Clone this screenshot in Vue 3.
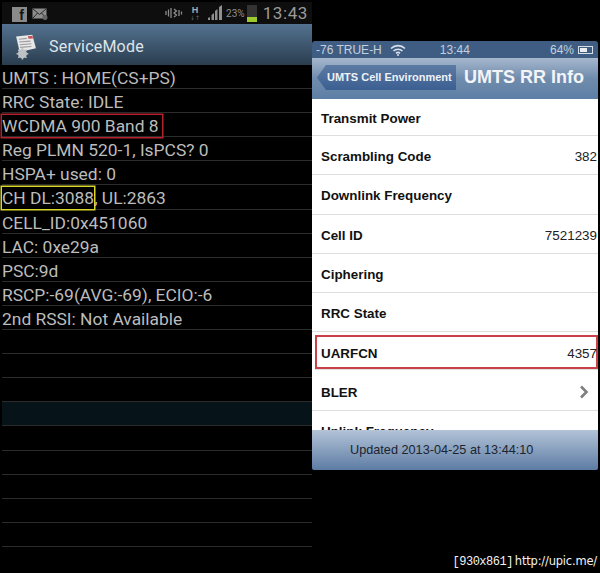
<script setup>
const androidRows = [
  { text: 'UMTS : HOME(CS+PS)' },
  { text: 'RRC State: IDLE' },
  { text: 'WCDMA 900 Band 8', mark: 'red' },
  { text: 'Reg PLMN 520-1, IsPCS? 0' },
  { text: 'HSPA+ used: 0' },
  { text: 'CH DL:3088', rest: ', UL:2863', mark: 'yellow' },
  { text: 'CELL_ID:0x451060' },
  { text: 'LAC: 0xe29a' },
  { text: 'PSC:9d' },
  { text: 'RSCP:-69(AVG:-69), ECIO:-6' },
  { text: '2nd RSSI: Not Available' },
  { text: '' },
  { text: '' },
  { text: '' },
  { text: '', active: true },
  { text: '' },
  { text: '' },
  { text: '' },
  { text: '' },
  { text: '' }
]
const iosRows = [
  { label: 'Transmit Power' },
  { label: 'Scrambling Code', value: '382' },
  { label: 'Downlink Frequency' },
  { label: 'Cell ID', value: '7521239' },
  { label: 'Ciphering' },
  { label: 'RRC State' },
  { label: 'UARFCN', value: '4357', mark: true },
  { label: 'BLER', chevron: true },
  { label: 'Uplink Frequency' }
]
</script>

<template>
  <div class="page">
    <section class="android">
      <div class="statusbar">
        <span class="fb">f</span>
        <svg class="mail" width="16" height="12" viewBox="0 0 16 12"><rect x="0.5" y="0.5" width="14" height="10" fill="#8d8d8d"/><path d="M1 1l6.500 5.500L14 1M1 10l4.500-5M14 10l-4.500-5" fill="none" stroke="#2a2a2a" stroke-width="1"/><circle cx="13" cy="9.500" r="2.500" fill="#666"/></svg>
        <span class="spacer"></span>
        <svg class="mute" width="18" height="12" viewBox="0 0 18 12"><path d="M1 4v4M3.500 2.500v7M6 1v10M9 2l2.500 2-2.500 2 2.500 2-2.500 2M14 3v6M16.500 4.500v3" fill="none" stroke="#8b8b8b" stroke-width="1.300"/></svg>
        <span class="hplus"><b>H</b><i>↓↑</i></span>
        <svg class="signal" width="15" height="15" viewBox="0 0 15 15"><path d="M0 15V13L2 12V15ZM3.500 15V10L6 8V15ZM7 15V6L9.500 4V15ZM11 15V2L14 0V15Z" fill="#8f8f8f"/></svg>
        <span class="pct">23%</span>
        <span class="battery"><i></i></span>
        <span class="clock">13:43</span>
      </div>
      <header class="actionbar">
        <svg class="appicon" width="24" height="27" viewBox="0 0 26 30">
          <path d="M2 4L20 2L24 17L6 21Z" fill="#e8e8e8"/>
          <path d="M15 3.500L20 3L20.800 6L15.800 6.500Z" fill="#c8525a"/>
          <path d="M5 7L14 6M5.500 10L18 9M6 13L19 12M6.500 16L19 15" stroke="#9a9a9a" stroke-width="1.200"/>
          <circle cx="9" cy="23" r="5" fill="#bfc2c4"/>
          <circle cx="9" cy="23" r="2" fill="#5b6670"/>
          <path d="M9 16.500V29.500M2.500 23H15.500M4.500 18.500L13.500 27.500M13.500 18.500L4.500 27.500" stroke="#bfc2c4" stroke-width="1.800"/>
        </svg>
        <h1>ServiceMode</h1>
      </header>
      <div class="list">
        <div v-for="(row, i) in androidRows" :key="i" class="row" :class="{ active: row.active }">
          <span :class="row.mark">{{ row.text }}</span>{{ row.rest }}
        </div>
      </div>
    </section>

    <section class="ios">
      <div class="ios-status">
        <span>-76 TRUE-H</span>
        <svg class="wifi" width="16" height="12" viewBox="0 0 16 12"><path d="M1 4.500a10 10 0 0 1 14 0M3.500 7a6.500 6.500 0 0 1 9 0M6 9.300a3 3 0 0 1 4 0" fill="none" stroke="#d8e0ea" stroke-width="1.600"/><circle cx="8" cy="11" r="1" fill="#d8e0ea"/></svg>
        <span class="ios-time">13:44</span>
        <span class="ios-pct">64%</span>
        <span class="ios-batt"><i></i></span>
      </div>
      <nav class="navbar">
        <span class="back">UMTS Cell Environment</span>
        <h2>UMTS RR Info</h2>
      </nav>
      <div class="ios-list">
        <div v-for="row in iosRows" :key="row.label" class="ios-row" :class="{ marked: row.mark }">
          <strong>{{ row.label }}</strong>
          <span v-if="row.value">{{ row.value }}</span>
          <svg v-if="row.chevron" width="10" height="14" viewBox="0 0 10 14"><path d="M2 1.500L7.500 7L2 12.500" fill="none" stroke="#7f7f7f" stroke-width="2.600"/></svg>
        </div>
      </div>
      <footer class="ios-footer">Updated 2013-04-25 at 13:44:10</footer>
    </section>

    <div class="watermark"><span class="wm-size">[930x861]</span><span class="wm-url">http://upic.me/</span></div>
  </div>
</template>

<style>
html, body { margin: 0; background: #000; }
</style>

<style scoped>
.page {
  position: relative;
  width: 600px;
  height: 573px;
  overflow: hidden;
  background: #000;
  display: flex;
  align-items: flex-start;
  font-family: Roboto, "Liberation Sans", sans-serif;
}
.android {
  width: 310px;
  margin: 2px 0 0 2px;
  flex: none;
}
.statusbar {
  height: 22px;
  background: #0e0e0e;
  display: flex;
  align-items: center;
  color: #8f8f8f;
  padding: 0 4px 0 10px;
}
.fb {
  width: 15px;
  height: 15px;
  margin-top: 2px;
  background: #8a8a8a;
  color: #151515;
  font: bold 14px/16px "Liberation Sans", sans-serif;
  text-align: right;
  padding-right: 3px;
  box-sizing: border-box;
}
.mail { margin: 2px 0 0 5px; }
.spacer { flex: 1; }
.mute { margin-right: 6px; }
.hplus {
  display: flex;
  flex-direction: column;
  align-items: center;
  width: 12px;
  margin-right: 7px;
  line-height: 7px;
}
.hplus b { font: bold 9px/9px "Liberation Sans", sans-serif; color: #aaa; }
.hplus i { font: normal 6px/6px "DejaVu Sans", sans-serif; color: #666; }
.signal { margin-right: 3px; margin-bottom: 1px; }
.pct { font-size: 10px; color: #8f8f8f; }
.battery {
  width: 10px;
  height: 17px;
  margin: 0 6px 0 2px;
  background: #333;
  display: flex;
  align-items: flex-end;
  flex: none;
}
.battery i { display: block; width: 100%; height: 5px; background: #9bc92e; }
.clock { font-size: 17px; color: #9a9a9a; letter-spacing: 0.6px; }
.actionbar {
  height: 41px;
  background: linear-gradient(#53728f, #2a3d4f);
  display: flex;
  align-items: center;
  padding: 4px 0 0 12px;
  box-sizing: border-box;
}
.appicon { margin-right: 11px; }
h1 {
  margin: 0;
  font-size: 16px;
  font-weight: 400;
  color: #dfe5ea;
  letter-spacing: 0.2px;
}
.list { background: #000; }
.row {
  height: 24.1px;
  box-sizing: border-box;
  border-bottom: 1px solid #2b2b2b;
  color: #bcbcbc;
  font-size: 17.4px;
  line-height: 26px;
  white-space: nowrap;
}
.row.active { background: #06141a; }
.red { box-shadow: 0 0 0 1.500px #b5202c; padding: 1px 3px 1px 0; }
.yellow { box-shadow: 0 0 0 1.500px #d8d82a; padding: 1px 0; }
.ios {
  width: 286px;
  height: 429px;
  margin-top: 41px;
  flex: none;
  display: flex;
  flex-direction: column;
  overflow: hidden;
  border-radius: 3px 3px 2px 2px;
  font-family: "Liberation Sans", sans-serif;
}
.ios-status {
  height: 17px;
  flex: none;
  background: #3f5d83;
  color: #c4d0de;
  font-size: 12px;
  display: flex;
  align-items: center;
  padding: 0 5px 0 4px;
}
.wifi { margin-left: 8px; }
.ios-time { margin-left: 34px; flex: 1; }
.ios-pct { margin-right: 4px; }
.ios-batt {
  width: 15px;
  height: 8px;
  border: 1px solid #d6dde6;
  padding: 1px;
  box-sizing: border-box;
  display: flex;
}
.ios-batt i { width: 64%; background: #e8edf2; display: block; }
.navbar {
  height: 41px;
  flex: none;
  box-sizing: border-box;
  background: linear-gradient(#a6b7cd, #6f8cad 50%, #5d7fa5);
  display: flex;
  align-items: center;
  padding: 0 0 2px 5px;
}
.back {
  height: 25px;
  width: 139px;
  box-sizing: border-box;
  background: linear-gradient(#5c7ba3, #3b5f92);
  clip-path: polygon(0 50%, 9px 0, 100% 0, 100% 100%, 9px 100%);
  color: #eef2f7;
  font-size: 11px;
  font-weight: 700;
  line-height: 25px;
  padding-left: 10px;
  white-space: nowrap;
}
h2 {
  margin: 0 0 0 8px;
  font-size: 18px;
  font-weight: 700;
  color: #f2f4f7;
  white-space: nowrap;
}
.ios-list {
  flex: 1;
  min-height: 0;
  overflow: hidden;
  background: #fff;
}
.ios-row {
  height: 39.3px;
  box-sizing: border-box;
  border-bottom: 1px solid #dedede;
  padding: 3px 1px 0 9px;
  display: flex;
  align-items: center;
  justify-content: space-between;
  font-size: 13.4px;
  color: #222;
}
.ios-row:first-child { height: 37px; }
.ios-row strong { font-weight: 700; color: #111; }
.ios-row svg { margin-right: 8px; }
.ios-row.marked {
  box-shadow: inset 0 0 0 2px #c8404a;
  margin: 3px 0 1.300px 3px;
  height: 35px;
  padding: 2px 1px 0 6px;
}
.ios-footer {
  height: 40px;
  flex: none;
  background: linear-gradient(#b3c3d7, #5d7ca4);
  color: #1c2430;
  font-size: 12.7px;
  line-height: 40px;
  padding-left: 38px;
  box-sizing: border-box;
}
.watermark {
  position: absolute;
  right: 3px;
  bottom: 4px;
  color: #f2f2f2;
  font: 12px/14px "Liberation Mono", monospace;
  white-space: nowrap;
}
.wm-size { letter-spacing: -0.5px; margin-right: 2px; }
.wm-url { font: 11.5px/14px "DejaVu Sans", sans-serif; letter-spacing: -0.2px; }
</style>
